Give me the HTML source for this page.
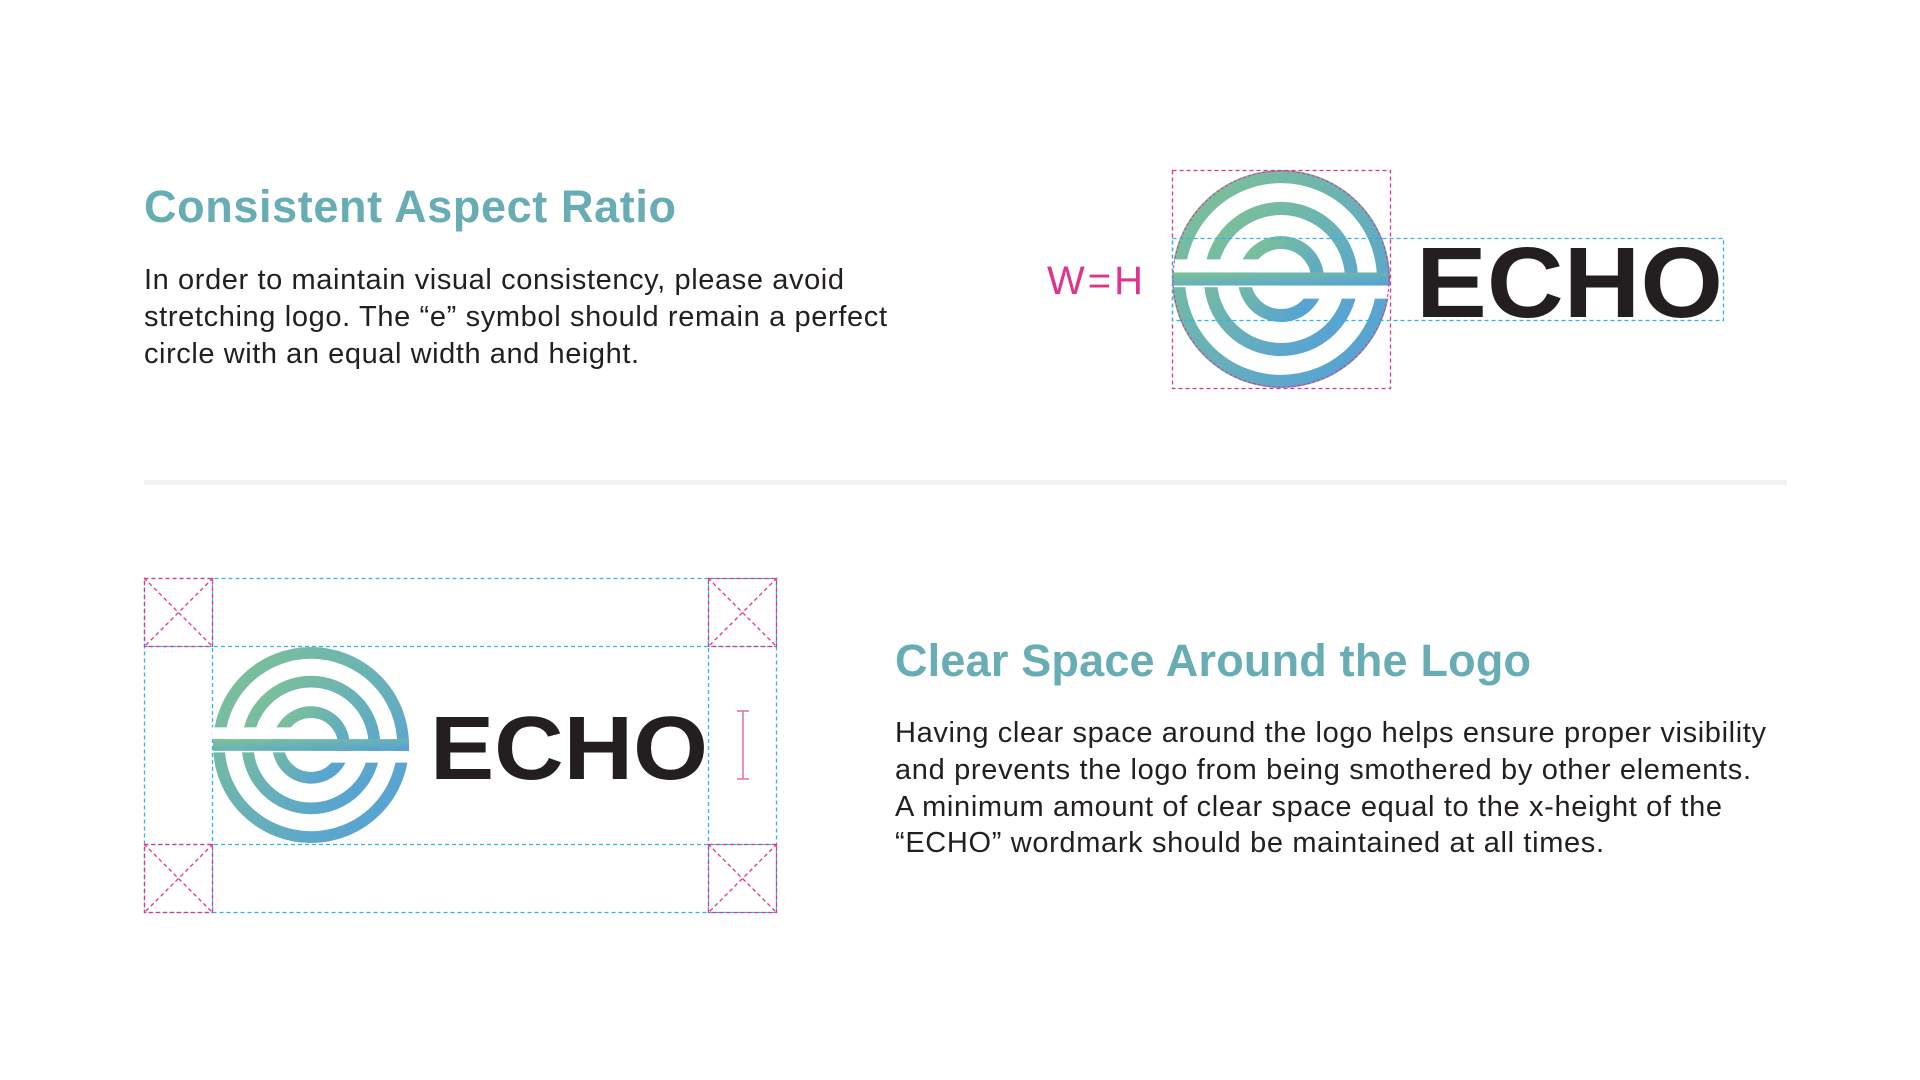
<!DOCTYPE html>
<html><head><meta charset="utf-8"><style>
html,body{margin:0;padding:0;background:#fff;width:1920px;height:1080px;overflow:hidden}
svg{display:block}
</style></head><body>
<svg width="1920" height="1080" viewBox="0 0 1920 1080" xmlns="http://www.w3.org/2000/svg">
<defs>
<linearGradient id="g" x1="0" y1="0" x2="1" y2="1">
<stop offset="0" stop-color="#7fc393"/><stop offset="1" stop-color="#529fdb"/>
</linearGradient>
<g id="logo">
<g fill="none" stroke="url(#g)" stroke-width="12">
<circle cx="0" cy="0" r="94"/>
<circle cx="0" cy="0" r="64.7"/>
<circle cx="0" cy="0" r="33.5"/>
</g>
<rect x="-101" y="-18" width="101" height="12" fill="#fff"/>
<rect x="0" y="6" width="101" height="12" fill="#fff"/>
<rect x="-100" y="-6" width="200" height="12" fill="url(#g)"/>
<rect x="-101" y="6" width="101" height="1.5" fill="#fff"/>
</g>
</defs>

<text x="144" y="222" font-family="Liberation Sans, sans-serif" font-weight="bold" font-size="45" fill="#67adb3" textLength="532">Consistent Aspect Ratio</text>
<g font-family="Liberation Sans, sans-serif" font-size="29" fill="#231f20" lengthAdjust="spacingAndGlyphs">
<text x="144" y="289" textLength="700">In order to maintain visual consistency, please avoid</text>
<text x="144" y="326" textLength="743">stretching logo. The “e” symbol should remain a perfect</text>
<text x="144" y="363" textLength="495">circle with an equal width and height.</text>
</g>

<text x="1047" y="294" font-family="Liberation Sans, sans-serif" font-size="40" fill="#e0338c" textLength="96">W=H</text>

<use href="#logo" transform="translate(1281,279) scale(1.09)"/>
<circle cx="1281" cy="279" r="108" fill="none" stroke="#e0338c" stroke-width="1" stroke-dasharray="3,2"/>
<rect x="1172.5" y="170.5" width="218" height="218" fill="none" stroke="#e0338c" stroke-width="1.3" stroke-dasharray="4,3"/>
<rect x="1172.5" y="238.5" width="551" height="82" fill="none" stroke="#2bb5e8" stroke-width="1.3" stroke-dasharray="4,3"/>
<text x="1416" y="317" font-family="Liberation Sans, sans-serif" font-weight="bold" font-size="100" fill="#231f20" textLength="307" lengthAdjust="spacingAndGlyphs">ECHO</text>

<rect x="144" y="480" width="1643" height="5" fill="#f1f1f1"/>

<g fill="none" stroke-width="1.3" stroke-dasharray="4,3">
<rect x="144.5" y="578.5" width="632" height="334" stroke="#2bb5e8"/>
<line x1="144" y1="646.5" x2="777" y2="646.5" stroke="#2bb5e8"/>
<line x1="144" y1="844.5" x2="777" y2="844.5" stroke="#2bb5e8"/>
<line x1="212.5" y1="578" x2="212.5" y2="913" stroke="#2bb5e8"/>
<line x1="708.5" y1="578" x2="708.5" y2="913" stroke="#2bb5e8"/>
<g stroke="#e0338c">
<rect x="144.5" y="578.5" width="68" height="68"/><path d="M144 578L213 647M213 578L144 647"/>
<rect x="708.5" y="578.5" width="68" height="68"/><path d="M708 578L777 647M777 578L708 647"/>
<rect x="144.5" y="844.5" width="68" height="68"/><path d="M144 844L213 913M213 844L144 913"/>
<rect x="708.5" y="844.5" width="68" height="68"/><path d="M708 844L777 913M777 844L708 913"/>
</g>
</g>
<use href="#logo" transform="translate(311,745) scale(0.98)"/>
<text x="430" y="779" font-family="Liberation Sans, sans-serif" font-weight="bold" font-size="90" fill="#231f20" textLength="278" lengthAdjust="spacingAndGlyphs">ECHO</text>
<g stroke="#e56aa8" stroke-width="1.5">
<line x1="743" y1="711" x2="743" y2="779"/>
<line x1="737" y1="711" x2="749" y2="711"/>
<line x1="737" y1="779" x2="749" y2="779"/>
</g>

<text x="895" y="676" font-family="Liberation Sans, sans-serif" font-weight="bold" font-size="45" fill="#67adb3" textLength="636">Clear Space Around the Logo</text>
<g font-family="Liberation Sans, sans-serif" font-size="29" fill="#231f20" lengthAdjust="spacingAndGlyphs">
<text x="895" y="742" textLength="871">Having clear space around the logo helps ensure proper visibility</text>
<text x="895" y="779" textLength="856">and prevents the logo from being smothered by other elements.</text>
<text x="895" y="816" textLength="827">A minimum amount of clear space equal to the x-height of the</text>
<text x="895" y="852" textLength="709">“ECHO” wordmark should be maintained at all times.</text>
</g>
</svg>
</body></html>
